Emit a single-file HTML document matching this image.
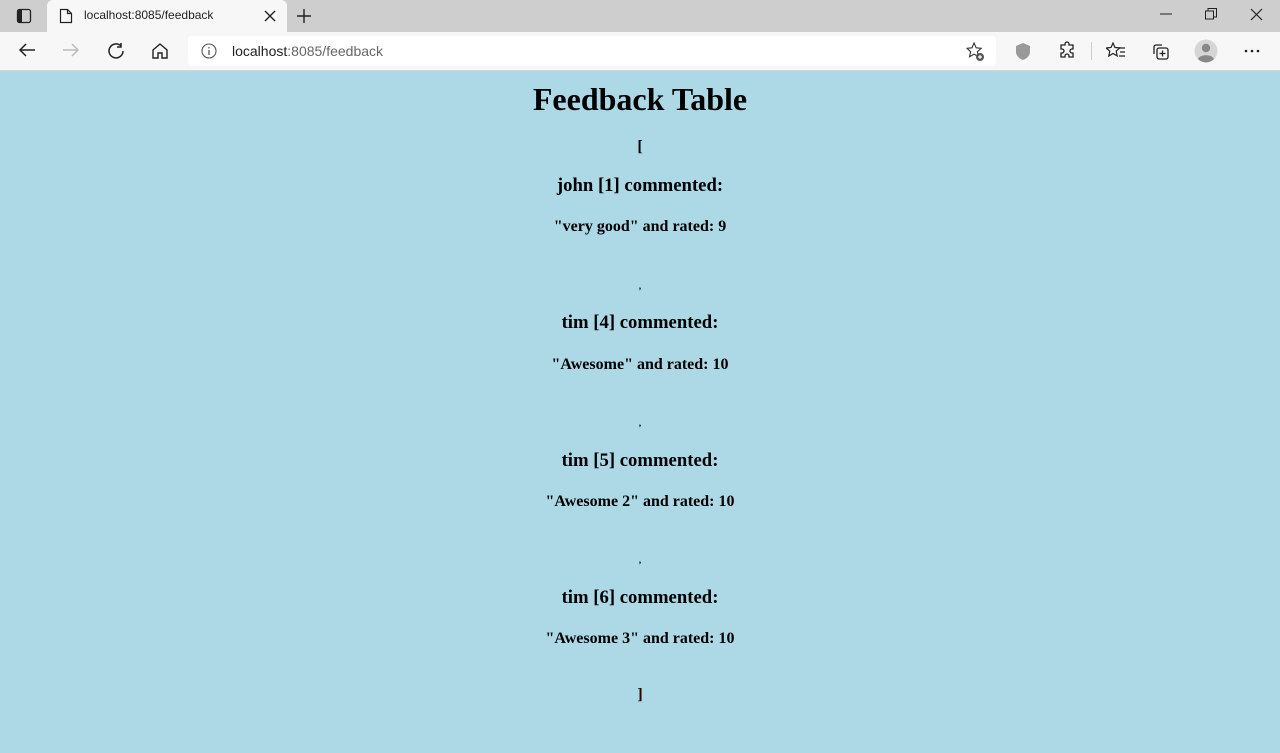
<!DOCTYPE html>
<html><head><style>
*{margin:0;padding:0;box-sizing:border-box}
body{width:1280px;height:753px;overflow:hidden;background:#add8e6;font-family:"Liberation Serif",serif;position:relative}
.chrome{position:absolute;left:0;top:0;width:1280px;height:71px;background:#f7f7f7;font-family:"Liberation Sans",sans-serif}
.tabbar{position:absolute;top:0;left:0;width:1280px;height:32px;background:#cecece}
.tab{position:absolute;left:47px;top:0;width:240px;height:32px;background:#f7f7f7;border-radius:6px 6px 0 0}
.url{position:absolute;left:188px;top:36px;width:808px;height:30px;background:#fff;border-radius:4px}
.t{position:absolute;left:0;width:1280px;text-align:center;font-weight:bold;color:#000}
svg{position:absolute}
</style></head><body>
<div class="chrome">
<div class="tabbar"></div>
<div class="tab"></div>
<svg style="left:16px;top:8px" width="16" height="16"><rect x="1.5" y="1.5" width="13" height="13" rx="2" fill="none" stroke="#222" stroke-width="1.3"/><rect x="2" y="2" width="4" height="12" fill="#222"/></svg>
<svg style="left:59px;top:8px" width="14" height="16"><path d="M1.5 1.5h7l4 4v9h-11z M8.5 1.5v4h4" fill="none" stroke="#222" stroke-width="1.2"/></svg>
<div style="position:absolute;left:84px;top:8px;font-size:12px;color:#222">localhost:8085/feedback</div>
<svg style="left:264px;top:10px" width="12" height="12"><path d="M1 1L11 11M11 1L1 11" stroke="#222" stroke-width="1.4"/></svg>
<svg style="left:296px;top:8px" width="16" height="16"><path d="M8 1v14M1 8h14" stroke="#222" stroke-width="1.4"/></svg>
<svg style="left:1160px;top:13px" width="12" height="2"><path d="M0 1h12" stroke="#222"/></svg>
<svg style="left:1205px;top:8px" width="12" height="12"><rect x="0.5" y="3" width="8" height="8" fill="none" stroke="#222"/><path d="M3 3V0.5h8.5V9H9" fill="none" stroke="#222"/></svg>
<svg style="left:1250px;top:8px" width="13" height="13"><path d="M1 1L12 12M12 1L1 12" stroke="#222" stroke-width="1.2"/></svg>
<svg style="left:18px;top:42px" width="18" height="16"><path d="M17 8H2M8 2L2 8l6 6" fill="none" stroke="#222" stroke-width="1.5"/></svg>
<svg style="left:62px;top:42px" width="18" height="16"><path d="M1 8h15M10 2l6 6-6 6" fill="none" stroke="#bbb" stroke-width="1.5"/></svg>
<svg style="left:107px;top:42px" width="18" height="18"><path d="M14 4A7 7 0 1 0 16 9M14 1v4h-4" fill="none" stroke="#222" stroke-width="1.5"/></svg>
<svg style="left:151px;top:42px" width="18" height="18"><path d="M2 8L9 2l7 6v8h-5v-5H7v5H2z" fill="none" stroke="#222" stroke-width="1.4"/></svg>
<div class="url"></div>
<svg style="left:201px;top:43px" width="16" height="16"><circle cx="8" cy="8" r="7" fill="none" stroke="#555" stroke-width="1.1"/><path d="M8 7v5M8 4v1.5" stroke="#555" stroke-width="1.3"/></svg>
<div style="position:absolute;left:232px;top:43px;font-size:14px;color:#222">localhost<span style="color:#666">:8085/feedback</span></div>
<svg style="left:966px;top:42px" width="20" height="20"><path d="M8 1l2.2 4.8 5 .5-3.8 3.4 1 5-4.4-2.6L3.6 14.7l1-5L1 6.3l5-.5z" fill="none" stroke="#333" stroke-width="1.1"/><circle cx="14" cy="15" r="4" fill="#555"/><path d="M14 13v4M12 15h4" stroke="#fff" stroke-width="1.2"/></svg>
<svg style="left:1015px;top:42px" width="16" height="18"><path d="M8 1L15 4v6c0 4-4 7-7 8-3-1-7-4-7-8V4z" fill="#999"/></svg>
<svg style="left:1058px;top:41px" width="19" height="19"><path d="M7 3a2 2 0 0 1 4 0v1h4v4h-1a2 2 0 0 0 0 4h1v4h-4v-1a2 2 0 0 0-4 0v1H3v-4h1a2 2 0 0 0 0-4H3V4h4z" fill="none" stroke="#222" stroke-width="1.3"/></svg>
<div style="position:absolute;left:1091px;top:42px;width:1px;height:18px;background:#ccc"></div>
<svg style="left:1106px;top:42px" width="20" height="18"><path d="M7 1l2 4.5 4.8.4-3.6 3.2 1 4.8L7 11.5 2.8 14l1-4.8L.2 6 5 5.5z" fill="none" stroke="#222" stroke-width="1.2"/><path d="M13 6h6M14 10h5M13 14h6" stroke="#222" stroke-width="1.2"/></svg>
<svg style="left:1151px;top:42px" width="20" height="20"><path d="M3 12V5a2 2 0 0 1 2-2h6" fill="none" stroke="#222" stroke-width="1.3"/><rect x="6" y="6" width="11" height="11" rx="2" fill="none" stroke="#222" stroke-width="1.3"/><path d="M11.5 8.5v6M8.5 11.5h6" stroke="#222" stroke-width="1.3"/></svg>
<svg style="left:1194px;top:39px" width="24" height="24"><circle cx="12" cy="12" r="11.5" fill="#d6d6d6"/><circle cx="12" cy="9" r="4.2" fill="#888"/><path d="M4 20c2-5 14-5 16 0a11 11 0 0 1-16 0z" fill="#888"/></svg>
<svg style="left:1244px;top:49px" width="16" height="4"><circle cx="2" cy="2" r="1.3" fill="#222"/><circle cx="8" cy="2" r="1.3" fill="#222"/><circle cx="14" cy="2" r="1.3" fill="#222"/></svg>
<div style="position:absolute;left:0;top:70px;width:1280px;height:1px;background:#c8d8dc"></div>
</div>

<div class="t" style="top:79px;font-size:32px;line-height:40px">Feedback Table</div>
<div class="t" style="top:137px;font-size:16px;line-height:20px">[</div>

<div class="t" style="top:175px;font-size:18.72px;line-height:22px">john [1] commented:</div>
<div class="t" style="top:217px;font-size:16px;line-height:20px">"very good" and rated: 9</div>
<div class="t" style="top:280px;font-size:9px;line-height:12px">,</div>

<div class="t" style="top:312px;font-size:18.72px;line-height:22px">tim [4] commented:</div>
<div class="t" style="top:355px;font-size:16px;line-height:20px">"Awesome" and rated: 10</div>
<div class="t" style="top:417px;font-size:9px;line-height:12px">,</div>

<div class="t" style="top:450px;font-size:18.72px;line-height:22px">tim [5] commented:</div>
<div class="t" style="top:492px;font-size:16px;line-height:20px">"Awesome 2" and rated: 10</div>
<div class="t" style="top:554px;font-size:9px;line-height:12px">,</div>

<div class="t" style="top:587px;font-size:18.72px;line-height:22px">tim [6] commented:</div>
<div class="t" style="top:629px;font-size:16px;line-height:20px">"Awesome 3" and rated: 10</div>
<div class="t" style="top:685px;font-size:16px;line-height:20px;color:#300">]</div>
</body></html>
